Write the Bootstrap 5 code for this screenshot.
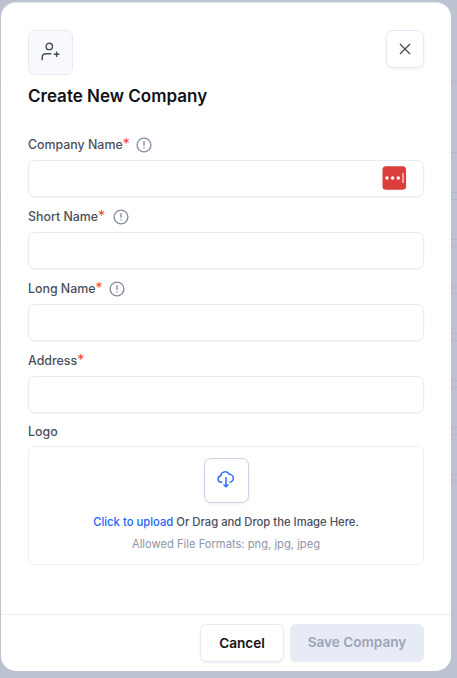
<!DOCTYPE html>
<html lang="en">
<head>
<meta charset="utf-8">
<meta name="viewport" content="width=device-width, initial-scale=1">
<title>Create New Company</title>
<link href="https://cdn.jsdelivr.net/npm/bootstrap@5.3.0/dist/css/bootstrap.min.css" rel="stylesheet">
<style>
/* dimmed table rows show as faint rules beside the panel */
body{background:
linear-gradient(#b0b8cd,#b0b8cd) 0 81px/100% 1px no-repeat,
linear-gradient(#b0b8cd,#b0b8cd) 0 152px/100% 1px no-repeat,
linear-gradient(#bdc2d1,#bdc2d1) 0 482px/100% 196px no-repeat,
linear-gradient(#bdc2d1,#bdc2d1) 0 0/100% 191px no-repeat,
repeating-linear-gradient(#bdc2d1 0 4px,#b0b8cd 4px 5px,#bdc2d1 5px 11px,#b0b8cd 11px 12px,#bdc2d1 12px 47px);
font-family:Inter,sans-serif;color:#4a4f5c;font-size:13px;height:678px;overflow:hidden;padding:2px 6px 7px 1px}
.panel{height:669px;border:0;border-top:1px solid #e3e6ee;border-radius:15px;background:#fff;overflow:hidden}
.panel-head{padding:26.500px 27px 0;height:127px}
.tile{width:45px;height:45px;border:1px solid #e8ebf5;border-radius:7px;background:#f8f9fc}
.soft{background:#fff;border:1px solid #e6eaf5;border-radius:7px;box-shadow:0 1px 3px rgba(30,50,100,.08)}
.close-btn{width:38px;height:38px}
.panel-title{font-size:17px;line-height:22px;font-weight:600;color:#101216;margin:10.500px 0 0}
.fields{padding:0 27px}
.field{height:72px}
.field-label{height:30px;font-weight:500;font-size:12.4px;line-height:29px}
.field-label span{letter-spacing:-.01px}
.field-label.d-flex{padding-bottom:1px}
.req{color:#f04438;font-size:14px;line-height:1;font-weight:400}
.info{margin-left:6px}
.logo-label{height:28px;line-height:28px}
.text-box{height:37px;border:1px solid #e8ebf4;border-radius:7px;box-shadow:0 1px 2px rgba(30,50,100,.07);padding:0 16px 2px}
.drop{height:119px;border:1px solid #edeff6;border-radius:6px;padding-top:11px}
.up{width:45px;height:45px;border-color:#cdd3e2;padding-bottom:3px}
.drop-text{font-size:11.27px;font-weight:500;line-height:16px;margin-top:11px}
.drop-text a{color:#1f66f5}
.drop-note{font-size:11.18px;color:#8f96a8;line-height:16px;margin-top:6px}
.panel-foot{height:57px;border-top:1px solid #eceff6;padding:9px 27px 0;gap:6px}
.act{height:38px;font-size:13.6px;line-height:34px;font-weight:600;padding:0;color:#101216}
.act-cancel{width:84px;padding-bottom:1px}
.act-save{width:134px;padding-bottom:3px}
.act-save,.act-save:disabled{background:#e7ebf5;color:#9ba4ba;border:0;border-radius:6px;opacity:1}
</style>
</head>
<body>
<main class="panel d-flex flex-column">
<header class="panel-head">
<div class="d-flex justify-content-between align-items-start">
<div class="tile d-flex align-items-center justify-content-center">
<svg width="20" height="20" viewBox="0 0 20 20" fill="none" stroke="#464b57" stroke-width="1.4"><circle cx="8.300" cy="4.400" r="3.200"/><path d="M1.200 18.300V15.500Q1.200 11.700 5 11.700H10.300M12.800 12.300h5.600M15.600 9.500v5.600"/></svg>
</div>
<button class="btn soft close-btn p-0 d-flex align-items-center justify-content-center" aria-label="Close">
<svg width="12" height="12" viewBox="0 0 12 12" stroke="#464b57" stroke-width="1.3"><path d="M1 1l10 10M11 1L1 11"/></svg>
</button>
</div>
<h1 class="panel-title">Create New Company</h1>
</header>
<section class="fields flex-grow-1">
<div class="field"><div class="field-label d-flex align-items-center"><span>Company Name<span class="req">*</span></span><svg class="info" width="16" height="16" viewBox="0 0 16 16" fill="none" stroke="#858ca0" stroke-width="1.4"><circle cx="8" cy="8" r="6.900"/><path d="M8 4.200v4.600M8 10.300v1.200"/></svg></div>
<div class="text-box d-flex align-items-center justify-content-end"><svg width="25" height="24" viewBox="0 0 25 24"><rect x=".5" y=".2" width="23.600" height="23.600" rx="3.500" fill="#db3d3a"/><g fill="#fff"><circle cx="5" cy="12" r="1.700"/><circle cx="10.600" cy="12" r="1.700"/><circle cx="16.300" cy="12" r="1.700"/></g><path d="M21 7v10" stroke="#f2b5b3" stroke-width="1.700"/></svg></div></div>
<div class="field"><div class="field-label d-flex align-items-center"><span>Short Name<span class="req">*</span></span><svg class="info ms-2" width="16" height="16" viewBox="0 0 16 16" fill="none" stroke="#858ca0" stroke-width="1.4"><circle cx="8" cy="8" r="6.900"/><path d="M8 4.200v4.600M8 10.300v1.200"/></svg></div>
<div class="text-box"></div></div>
<div class="field"><div class="field-label d-flex align-items-center"><span>Long Name<span class="req">*</span></span><svg class="info" width="16" height="16" viewBox="0 0 16 16" fill="none" stroke="#858ca0" stroke-width="1.4"><circle cx="8" cy="8" r="6.900"/><path d="M8 4.200v4.600M8 10.300v1.200"/></svg></div>
<div class="text-box"></div></div>
<div class="field"><div class="field-label">Address<span class="req">*</span></div><div class="text-box"></div></div>
<div class="field-label logo-label">Logo</div>
<div class="drop d-flex flex-column align-items-center">
<div class="soft up d-flex align-items-center justify-content-center"><svg width="20" height="20" viewBox="0 0 20 20" fill="none" stroke="#2f70f5" stroke-width="1.500"><path d="M6.300 13.300H5A3.300 3.300 0 0 1 4.700 6.800A4.500 4.500 0 0 1 13.200 5.300A4 4 0 1 1 13.500 13.300M10 8v9.500M7.500 15.500l2.500 2.300 2.500-2.300"/></svg></div>
<div class="drop-text"><a class="text-decoration-none" href="#">Click to upload</a> Or Drag and Drop the Image Here.</div>
<div class="drop-note">Allowed File Formats: png, jpg, jpeg</div>
</div>
</section>
<footer class="panel-foot d-flex justify-content-end">
<button class="btn soft act act-cancel">Cancel</button>
<button class="btn act act-save" disabled>Save Company</button>
</footer>
</main>
<script src="https://cdn.jsdelivr.net/npm/bootstrap@5.3.0/dist/js/bootstrap.bundle.min.js"></script>
</body>
</html>
